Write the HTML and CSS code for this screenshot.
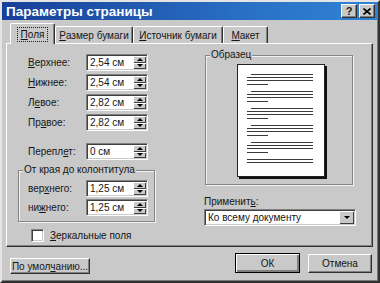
FILE: index.html
```html
<!DOCTYPE html>
<html lang="ru">
<head>
  <meta charset="UTF-8">
  <title>Параметры страницы</title>
  <link rel="stylesheet" href="styles.css">
</head>
<body>
  <div class="dialog">
    <div class="titlebar">
      <span class="title">Параметры страницы</span>
      <div class="caption-buttons">
        <span class="cap-btn help">?</span>
        <span class="cap-btn">
          <svg width="8" height="7" viewBox="0 0 8 7"><path d="M0.5 0.5 L7.5 6.5 M7.5 0.5 L0.5 6.5" stroke="#000" stroke-width="1.6"/></svg>
        </span>
      </div>
    </div>

    <div class="tabs">
      <div class="tab active"><span class="focus"><u>П</u>оля</span></div>
      <div class="tab tab-size"><u>Р</u>азмер бумаги</div>
      <div class="tab tab-source"><u>И</u>сточник бумаги</div>
      <div class="tab tab-layout"><u>М</u>акет</div>
    </div>

    <div class="panel">
      <div class="col-left">
        <div class="field"><label><u>В</u>ерхнее:</label><div class="spin"><span class="value">2,54 см</span><span class="spin-btns"><span class="up"></span><span class="down"></span></span></div></div>
        <div class="field"><label><u>Н</u>ижнее:</label><div class="spin"><span class="value">2,54 см</span><span class="spin-btns"><span class="up"></span><span class="down"></span></span></div></div>
        <div class="field"><label>Л<u>е</u>вое:</label><div class="spin"><span class="value">2,82 см</span><span class="spin-btns"><span class="up"></span><span class="down"></span></span></div></div>
        <div class="field"><label>Пр<u>а</u>вое:</label><div class="spin"><span class="value">2,82 см</span><span class="spin-btns"><span class="up"></span><span class="down"></span></span></div></div>
        <div class="field gutter"><label>Перепл<u>е</u>т:</label><div class="spin"><span class="value">0 см</span><span class="spin-btns"><span class="up"></span><span class="down"></span></span></div></div>

        <div class="group header-group">
          <span class="legend">От края до колонтитула</span>
          <div class="field"><label>вер<u>х</u>него:</label><div class="spin"><span class="value">1,25 см</span><span class="spin-btns"><span class="up"></span><span class="down"></span></span></div></div>
          <div class="field"><label>ни<u>ж</u>него:</label><div class="spin"><span class="value">1,25 см</span><span class="spin-btns"><span class="up"></span><span class="down"></span></span></div></div>
        </div>

        <div class="check-row">
          <span class="checkbox"></span>
          <span><u>З</u>еркальные поля</span>
        </div>
      </div>

      <div class="col-right">
        <div class="group preview-group">
          <span class="legend">Образец</span>
          <div class="page">
            <svg width="86" height="111" viewBox="0 0 86 111">
              <g stroke="#3a3a3a" stroke-width="1">
                <path d="M13 9.5H75 M9 12.5H75 M9 15.5H75 M9 19.5H30"/>
                <path d="M13 26.5H75 M9 29.5H75 M9 32.5H75 M9 36.5H30"/>
                <path d="M13 43.5H75 M9 46.5H75 M9 49.5H75 M9 53.5H30"/>
                <path d="M13 60.5H75 M9 63.5H75 M9 66.5H75 M9 70.5H30"/>
                <path d="M13 77.5H75 M9 80.5H75 M9 83.5H75 M9 87.5H30"/>
                <path d="M9 94.5H75 M9 97.5H75"/>
              </g>
            </svg>
          </div>
        </div>
        <div class="apply-label">Применит<u>ь</u>:</div>
        <div class="select">
          <span class="value">Ко всему документу</span>
          <span class="drop-btn"><span class="down"></span></span>
        </div>
      </div>
    </div>

    <div class="footer">
      <div class="btn btn-default-set">По умол<u>ч</u>анию...</div>
      <div class="btn btn-ok">ОК</div>
      <div class="btn btn-cancel">Отмена</div>
    </div>
  </div>
</body>
</html>
```

FILE: styles.css
```css
body {
  margin: 0;
  padding: 0;
  background: #c9c9c9;
  font-family: 'Liberation Sans', Arial, sans-serif;
  font-size: 10px;
  color: #151515;
}

.dialog {
  width: 380px;
  height: 283px;
  box-sizing: border-box;
  background: #c9c9c9;
  border: 2px solid;
  border-color: #e4e4e4 #303030 #303030 #e4e4e4;
  box-shadow: inset -1px -1px #7a7a7a;
}

.titlebar {
  height: 18px;
  display: flex;
  align-items: center;
  justify-content: space-between;
  background: linear-gradient(90deg, #173f98, #2a74c8 70%, #2f82d4);
}

.title {
  color: #fff;
  font-weight: bold;
  font-size: 13.5px;
  padding-left: 4px;
}

.caption-buttons {
  display: flex;
  gap: 2px;
  padding-right: 3px;
}

.cap-btn {
  width: 14px;
  height: 12px;
  display: flex;
  align-items: center;
  justify-content: center;
  background: #c9c9c9;
  border: 1px solid;
  border-color: #fff #303030 #303030 #fff;
  box-shadow: inset -1px -1px #808080;
}

.cap-btn.help {
  font-weight: bold;
  font-size: 11px;
  line-height: 12px;
}

/* tabs */
.tabs {
  display: flex;
  align-items: flex-end;
  height: 21px;
  margin-left: 8px;
  margin-top: 2px;
}

.tab {
  height: 17px;
  box-sizing: border-box;
  display: flex;
  align-items: center;
  justify-content: center;
  border: 1px solid;
  border-bottom: none;
  border-color: #fff #303030 #fff #fff;
  box-shadow: inset -1px 0 #808080;
  border-radius: 2px 2px 0 0;
}

.tab.active {
  width: 45px;
  height: 21px;
  margin-bottom: -1px;
  position: relative;
  z-index: 1;
  background: #c9c9c9;
}

.focus {
  outline: 1px dotted #222;
  outline-offset: 1px;
  padding: 0 2px;
}

.tab-size { width: 78px; }
.tab-source { width: 90px; }
.tab-layout { width: 45px; }

/* panel */
.panel {
  height: 204px;
  box-sizing: border-box;
  margin: 0 5px 0 4px;
  border: 1px solid;
  border-color: #fff #303030 #303030 #fff;
  box-shadow: inset -1px -1px #808080;
  display: grid;
  grid-template-columns: 137px 152px;
  column-gap: 49px;
  padding: 10px 0 0 11px;
}

.col-left {
  display: flex;
  flex-direction: column;
}

.field {
  display: flex;
  align-items: center;
  margin-bottom: 3px;
}

.field label {
  width: 58px;
  padding-left: 10px;
}

.group .field label {
  padding-left: 0;
}

.field.gutter {
  margin-top: 9px;
}

.spin, .select {
  height: 17px;
  box-sizing: border-box;
  display: flex;
  align-items: stretch;
  background: #fff;
  border: 1px solid;
  border-color: #808080 #fff #fff #808080;
  box-shadow: inset 1px 1px #404040, inset -1px -1px #c9c9c9;
  padding: 1px;
}

.spin {
  width: 62px;
}

.value {
  flex: 1;
  padding-left: 2px;
  line-height: 13px;
}

.spin-btns {
  width: 13px;
  display: flex;
  flex-direction: column;
}

.spin-btns span, .drop-btn {
  flex: 1;
  display: flex;
  align-items: center;
  justify-content: center;
  background: #c9c9c9;
  box-shadow: inset 1px 1px #fff, inset -1px -1px #404040;
}

.spin-btns .up::before {
  content: "";
  border: 3px solid transparent;
  border-top: none;
  border-bottom: 3px solid #000;
}

.spin-btns .down::before, .drop-btn .down::before {
  content: "";
  display: block;
  border: 3px solid transparent;
  border-bottom: none;
  border-top: 3px solid #000;
}

/* group boxes */
.group {
  position: relative;
  border: 1px solid #868686;
  box-shadow: inset 1px 1px #f2f2f2, 1px 1px #f2f2f2;
}

.legend {
  position: absolute;
  top: -7px;
  left: 4px;
  padding: 0 1px;
  background: #c9c9c9;
  line-height: 12px;
}

.header-group {
  margin-top: 7px;
  padding: 9px 0 3px 9px;
}

.header-group .field {
  margin-bottom: 2px;
}

.check-row {
  display: flex;
  align-items: center;
  gap: 6px;
  margin: 7px 0 0 13px;
}

.checkbox {
  width: 13px;
  height: 13px;
  box-sizing: border-box;
  background: #fff;
  border: 1px solid;
  border-color: #808080 #fff #fff #808080;
  box-shadow: inset 1px 1px #404040, inset -1px -1px #c9c9c9;
}

.col-right {
  padding-top: 1px;
}

.preview-group {
  width: 148px;
  height: 130px;
  box-sizing: border-box;
  margin-left: 1px;
  padding: 8px 0 0 31px;
}

.page {
  width: 88px;
  height: 113px;
  box-sizing: border-box;
  background: #fff;
  border: 1px solid #222;
  box-shadow: 2px 2px 0 #111;
}

.page svg {
  display: block;
}

.apply-label {
  margin-top: 11px;
  line-height: 12px;
}

.select {
  margin-top: 1px;
  width: 152px;
}

.drop-btn {
  flex: 0 0 15px;
}

/* footer buttons */
.footer {
  display: flex;
  align-items: flex-start;
  padding: 6px 6px 0 8px;
}

.btn {
  height: 20px;
  box-sizing: border-box;
  display: flex;
  align-items: center;
  justify-content: center;
  background: #c9c9c9;
  border: 1px solid;
  border-color: #fff #303030 #303030 #fff;
  box-shadow: inset -1px -1px #808080;
}

.btn-default-set {
  width: 80px;
  height: 16px;
  margin-top: 5px;
}

.btn-ok {
  width: 65px;
  margin-left: auto;
  border: 1px solid #000;
  box-shadow: inset 1px 1px #fff, inset -2px -2px #808080;
}

.btn-cancel {
  width: 64px;
  height: 19px;
  margin-top: 1px;
  margin-left: 8px;
}
```
